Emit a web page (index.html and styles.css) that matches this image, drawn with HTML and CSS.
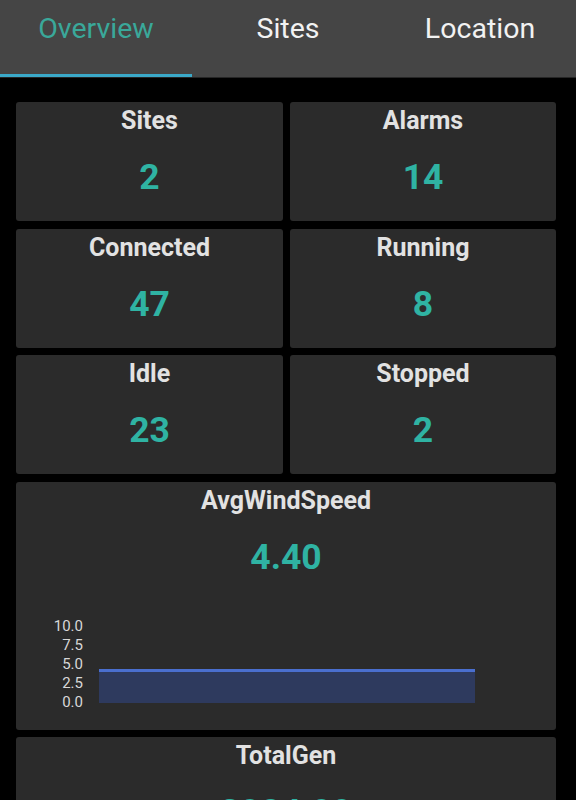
FILE: index.html
```html
<!DOCTYPE html>
<html>
<head>
<meta charset="utf-8">
<link rel="stylesheet" href="styles.css">
</head>
<body>
<div class="tabs">
  <div class="tab active">Overview</div>
  <div class="tab">Sites</div>
  <div class="tab">Location</div>
</div>
<div class="content">
  <div class="grid">
    <div class="card"><div class="title">Sites</div><div class="value">2</div></div>
    <div class="card"><div class="title">Alarms</div><div class="value">14</div></div>
    <div class="card"><div class="title">Connected</div><div class="value">47</div></div>
    <div class="card"><div class="title">Running</div><div class="value">8</div></div>
    <div class="card"><div class="title">Idle</div><div class="value">23</div></div>
    <div class="card"><div class="title">Stopped</div><div class="value">2</div></div>
    <div class="card wide">
      <div class="title">AvgWindSpeed</div>
      <div class="value">4.40</div>
      <div class="chart">
        <div class="axis">
          <span>10.0</span><span>7.5</span><span>5.0</span><span>2.5</span><span>0.0</span>
        </div>
        <div class="plot">
          <div class="bar" style="height:44%"></div>
        </div>
      </div>
    </div>
    <div class="card wide">
      <div class="title">TotalGen</div>
      <div class="value">2084.00</div>
    </div>
  </div>
</div>
</body>
</html>
```
FILE: styles.css
```css
html, body {
  margin: 0;
  padding: 0;
  background: #000;
  font-family: Roboto, "Liberation Sans", sans-serif;
  overflow: hidden;
  height: 800px;
}
.tabs {
  display: flex;
  height: 77px;
  background: #454545;
  border-bottom: 1px solid #262626;
}
.tab {
  flex: 1;
  display: flex;
  justify-content: center;
  align-items: flex-start;
  padding-top: 12px;
  font-size: 28.5px;
  line-height: 34px;
  color: #f2f2f2;
  box-sizing: border-box;
  border-bottom: 3px solid transparent;
}
.tab.active {
  color: #3aa89a;
  border-bottom-color: #3ba9c8;
}
.content {
  padding: 24px 20px 0 16px;
}
.grid {
  display: grid;
  grid-template-columns: 267px 266px;
  grid-template-rows: 119px 119px 119px 248px 119px;
  column-gap: 7px;
  row-gap: 7.5px;
}
.card {
  background: #2b2b2b;
  border-radius: 3px;
  display: flex;
  flex-direction: column;
  align-items: center;
}
.card.wide {
  grid-column: 1 / span 2;
}
.title {
  margin-top: 4px;
  font-size: 25px;
  font-weight: bold;
  color: #e2e2e2;
  line-height: 30px;
}
.value {
  margin-top: 21px;
  font-size: 35.5px;
  font-weight: bold;
  color: #2fb3a3;
  line-height: 40px;
}
.chart {
  align-self: stretch;
  display: flex;
  margin-top: 40.5px;
  padding-left: 36px;
}
.axis {
  display: flex;
  flex-direction: column;
  align-items: flex-end;
  width: 31px;
  font-size: 15px;
  color: #d8d8d8;
}
.axis span {
  height: 19px;
  line-height: 19px;
}
.plot {
  width: 376px;
  margin-left: 16px;
  height: 76px;
  margin-top: 9.5px;
  display: flex;
  align-items: flex-end;
}
.bar {
  width: 100%;
  box-sizing: border-box;
  background: #2e3a5e;
  border-top: 3px solid #4a6fcf;
}
```
